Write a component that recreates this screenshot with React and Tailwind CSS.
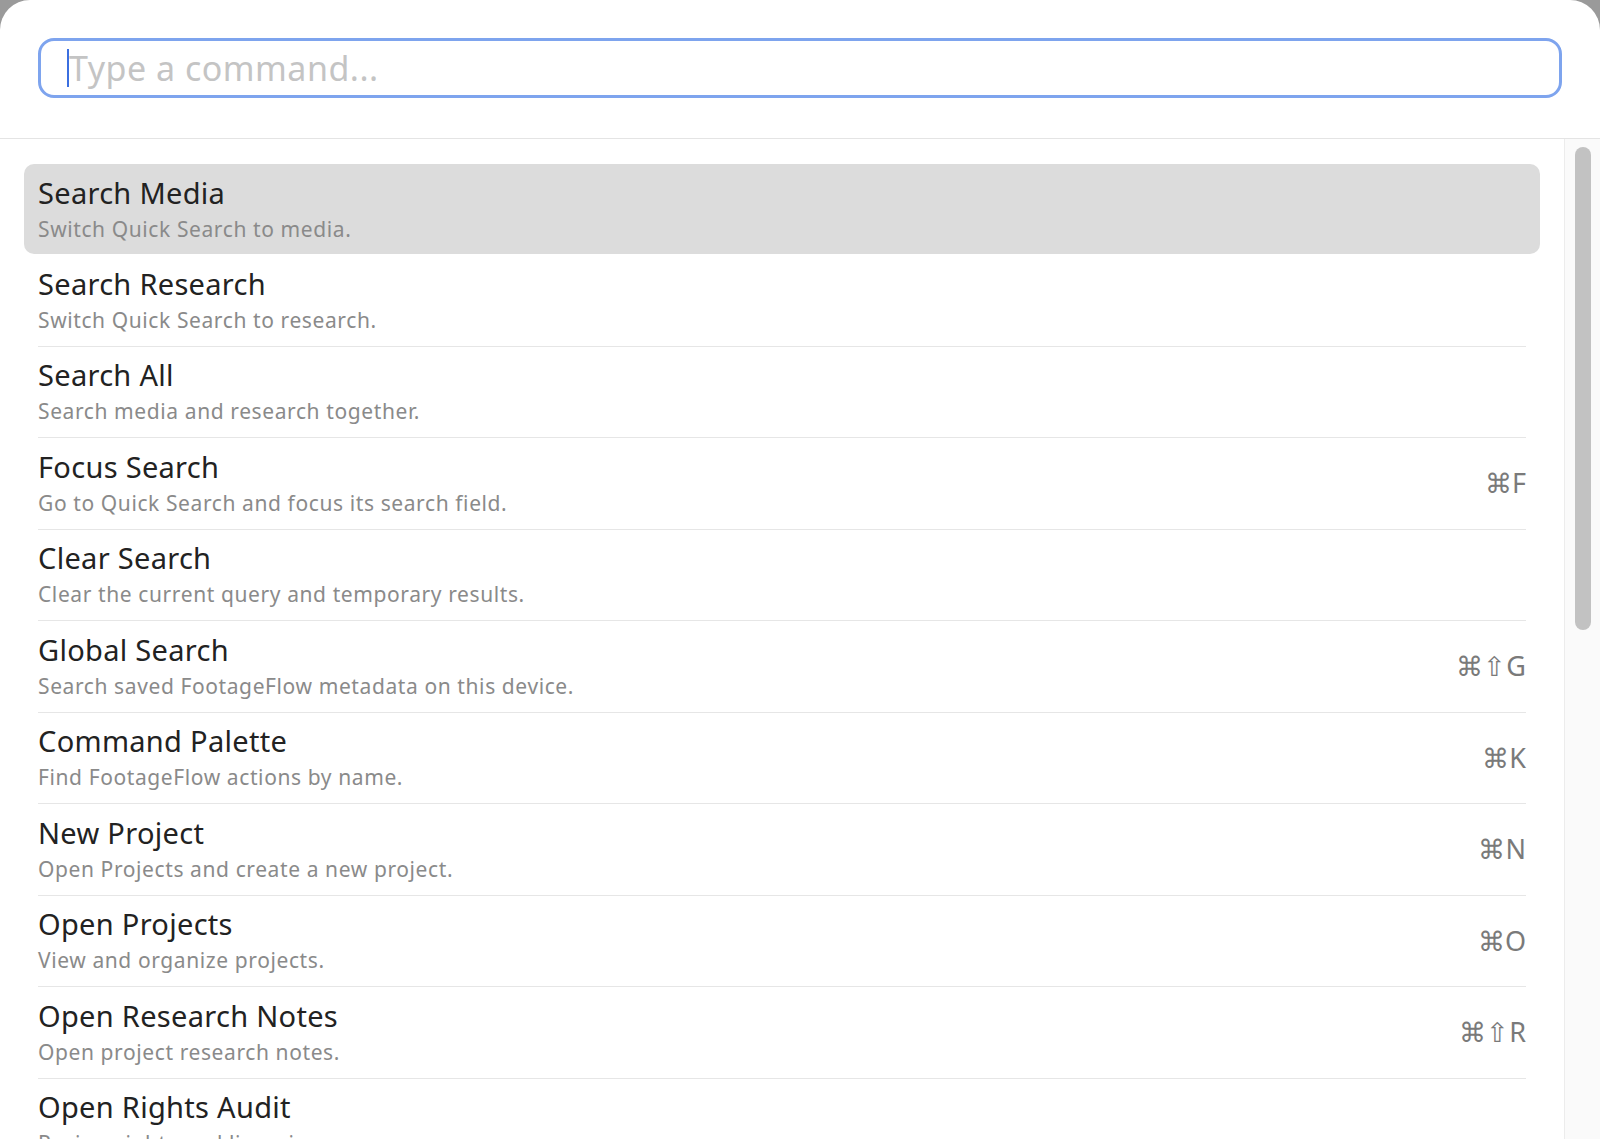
const items = [
    ["Search Media", "Switch Quick Search to media.", ""],
    ["Search Research", "Switch Quick Search to research.", ""],
    ["Search All", "Search media and research together.", ""],
    ["Focus Search", "Go to Quick Search and focus its search field.", "⌘F"],
    ["Clear Search", "Clear the current query and temporary results.", ""],
    ["Global Search", "Search saved FootageFlow metadata on this device.", "⌘⇧G"],
    ["Command Palette", "Find FootageFlow actions by name.", "⌘K"],
    ["New Project", "Open Projects and create a new project.", "⌘N"],
    ["Open Projects", "View and organize projects.", "⌘O"],
    ["Open Research Notes", "Open project research notes.", "⌘⇧R"],
    ["Open Rights Audit", "Review rights and licensing.", ""],
];

export default function App() {
    return (
        <div className="h-[1139px] w-[1600px] overflow-hidden bg-[#9a9a9a] font-['Liberation_Sans','DejaVu_Sans',sans-serif]">
            <div className="flex h-full flex-col overflow-hidden rounded-t-[30px] bg-white">
                <div className="h-[139px] shrink-0 border-b border-[#e4e4e4] px-[38px] pt-[38px]">
                    <div className="flex h-[60px] items-center rounded-[16px] border-[3px] border-[#7ea4ee] px-[26px]">
                        <span className="h-[38px] w-[2px] bg-[#3b6fe0]" />
                        <span className="text-[34px] tracking-[0.5px] text-[#c4c4c4]">Type a command...</span>
                    </div>
                </div>
                <div className="flex min-h-0 flex-1">
                    <div className="flex-1 overflow-hidden pl-[24px] pr-[24px] pt-[25px]">
                        {items.map(([title, sub, key], i) => (
                            <div
                                key={title}
                                className={
                                    i === 0
                                        ? "mb-[1px] flex h-[90px] items-center rounded-[10px] bg-[#dcdcdc] px-[14px]"
                                        : "mx-[14px] flex h-[91.5px] items-center border-b border-[#e6e6e6]"
                                }
                            >
                                <div className="flex-1">
                                    <div className="text-[29px] leading-[36px] tracking-[0.3px] text-[#222]">{title}</div>
                                    <div className="mt-[3px] text-[21px] leading-[30px] tracking-[0.6px] text-[#8a8a8a]">{sub}</div>
                                </div>
                                {key && <div className="text-[27px] text-[#7a7a7a]">{key}</div>}
                            </div>
                        ))}
                    </div>
                    <div className="w-[36px] shrink-0 border-l border-[#ececec] bg-[#fafafa] pt-[8px]">
                        <div className="mx-auto h-[483px] w-[16px] rounded-full bg-[#c2c2c2]" />
                    </div>
                </div>
            </div>
        </div>
    );
}
